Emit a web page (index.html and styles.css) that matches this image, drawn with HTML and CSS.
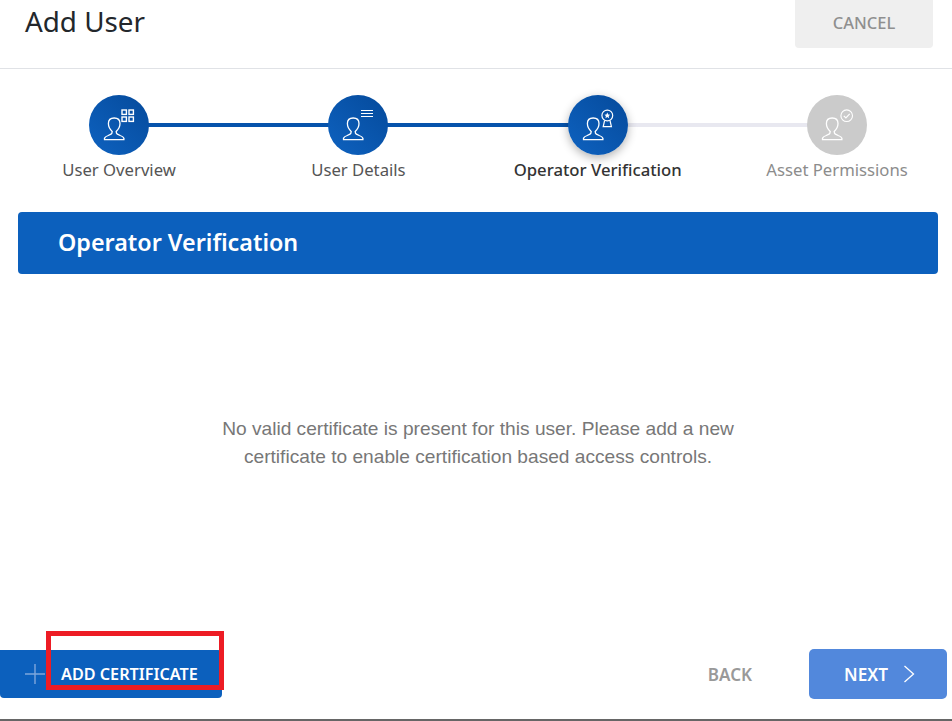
FILE: index.html
```html
<!DOCTYPE html>
<html lang="en">
<head>
<meta charset="utf-8">
<title>Add User</title>
<link rel="stylesheet" href="styles.css">
</head>
<body>
<svg class="defs" width="0" height="0" aria-hidden="true">
  <symbol id="person" viewBox="0 0 60 60">
    <path d="M15.5 44.6H34.9V43.2Q34.4 41.6 31.2 40.5L28.4 39.2Q27.2 38.2 27.2 36.4Q31 33 31 28.6Q31 23 25.2 23Q19.4 23 19.4 28.6Q19.4 33 23.2 36.4Q23.2 38.2 22 39.2L19.2 40.5Q16 41.6 15.5 43.2Z" fill="none" stroke="#fff" stroke-width="1.3"/>
  </symbol>
</svg>
<div class="page">
  <header class="top">
    <h1 class="title">Add User</h1>
    <button class="cancel">CANCEL</button>
  </header>

  <ol class="stepper">
    <li class="step done">
      <span class="dot">
        <svg class="ico" viewBox="0 0 60 60"><use href="#person"/>
          <g fill="none" stroke="#fff" stroke-width="1.4">
            <rect x="33" y="15" width="4.4" height="4.4"/><rect x="40" y="15" width="4.4" height="4.4"/>
            <rect x="33" y="22" width="4.4" height="4.4"/><rect x="40" y="22" width="4.4" height="4.4"/>
          </g>
        </svg>
      </span>
      <span class="label">User Overview</span>
    </li>
    <li class="step done">
      <span class="dot">
        <svg class="ico" viewBox="0 0 60 60"><use href="#person"/>
          <path d="M33 15.5H45M33 18.5H45M33 21.5H45" fill="none" stroke="#fff" stroke-width="1.1"/>
        </svg>
      </span>
      <span class="label">User Details</span>
    </li>
    <li class="step active">
      <span class="dot">
        <svg class="ico" viewBox="0 0 60 60"><use href="#person"/>
          <circle cx="39.3" cy="20.5" r="5.4" fill="none" stroke="#fff" stroke-width="1.2"/>
          <path d="M39.3 17.6L40.2 19.6L42.2 19.8L40.7 21.1L41.1 23.2L39.3 22.1L37.5 23.2L37.9 21.1L36.4 19.8L38.4 19.6Z" fill="#fff"/>
          <path d="M36.6 25.5L35.2 31.6H43.4L42 25.5" fill="none" stroke="#fff" stroke-width="1.2"/>
        </svg>
      </span>
      <span class="label">Operator Verification</span>
    </li>
    <li class="step pending">
      <span class="dot">
        <svg class="ico" viewBox="0 0 60 60"><use href="#person"/>
          <circle cx="39.7" cy="20.7" r="5.8" fill="none" stroke="#fff" stroke-width="1.1"/>
          <path d="M36.8 20.8L38.9 22.9L42.7 18.9" fill="none" stroke="#fff" stroke-width="1.2"/>
        </svg>
      </span>
      <span class="label">Asset Permissions</span>
    </li>
  </ol>

  <div class="banner">Operator Verification</div>

  <main class="message">
    <p class="note">No valid certificate is present for this user. Please add a new certificate to enable certification based access controls.</p>
  </main>

  <footer class="actions">
    <div class="add-wrap">
      <button class="add">
        <svg class="plus" viewBox="0 0 20 20"><path d="M10 0V20M0 10H20" fill="none" stroke="#7ea6dc" stroke-width="1.4"/></svg>
        <span>ADD CERTIFICATE</span>
      </button>
      <span class="callout"></span>
    </div>
    <div class="nav">
      <button class="back">BACK</button>
      <button class="next">
        <span>NEXT</span>
        <svg class="chev" viewBox="0 0 12 18"><path d="M1.5 1L10.5 9L1.5 17" fill="none" stroke="#fff" stroke-width="1.3"/></svg>
      </button>
    </div>
  </footer>
</div>
</body>
</html>
```

FILE: styles.css
```css
* { box-sizing: border-box; }
html, body { margin: 0; padding: 0; height: 721px; overflow: hidden; background: #fff; }
body { font-family: "Noto Sans", "Open Sans", sans-serif; color: #222; }
.defs { position: absolute; }
button { font-family: inherit; border: 0; cursor: pointer; }

.page { height: 721px; display: flex; flex-direction: column; border-bottom: 2px solid #666; }

.top { height: 69px; flex: none; display: flex; justify-content: space-between; align-items: flex-start; padding: 0 19px 0 25px; border-bottom: 1px solid #e0e2e6; }
.title { margin: 3px 0 0; font-size: 27.8px; line-height: 36px; font-weight: 400; color: #23272c; }
.cancel { width: 138px; height: 48px; background: #efefef; color: #8f8f8f; font-size: 16.5px; font-weight: 500; border-radius: 0 0 4px 4px; padding: 0 0 4px; }

.stepper { list-style: none; margin: 0 0 0 -0.6px; padding: 26px 0 0; display: grid; grid-template-columns: repeat(4, 239.33px); height: 117px; flex: none; }
.step { position: relative; display: flex; flex-direction: column; align-items: center; }
.step::after { content: ""; position: absolute; top: 28px; left: 50%; width: 100%; height: 4px; background: #e8e8f0; }
.step.done::after { background: #0653ab; }
.step:last-child::after { display: none; }
.dot { position: relative; z-index: 1; width: 60px; height: 60px; border-radius: 50%; background: linear-gradient(to top right, #0e62c0, #054a9b); }
.pending .dot { background: #cbcbcb; }
.active .dot { box-shadow: 0 3px 10px rgba(0, 0, 0, .3); }
.ico { display: block; width: 60px; height: 60px; }
.label { margin-top: 3px; font-size: 16.7px; line-height: 24px; color: #555; white-space: nowrap; }
.active .label { color: #333; font-weight: 500; }
.pending .label { color: #8c8c8c; }

.banner { flex: none; margin: 26px 14px 0 18px; height: 62px; padding: 0 0 2px 40px; display: flex; align-items: center; background: #0c60bd; border-radius: 4px; color: #fff; font-size: 23.3px; font-weight: 600; }

.message { flex: 1; padding: 141px 14px 0 18px; }
.note { margin: 0 auto; max-width: 540px; text-align: center; font-family: "Liberation Sans", Arial, sans-serif; font-size: 19.15px; line-height: 28px; color: #777; }

.actions { flex: none; height: 70px; display: flex; justify-content: space-between; align-items: flex-start; padding-right: 5px; }
.add-wrap { position: relative; margin-top: 1px; }
.add { width: 222px; height: 48px; padding: 0 0 0 25px; display: flex; align-items: center; gap: 16px; background: #0c60bd; color: #fff; font-size: 16.2px; font-weight: 600; border-radius: 0 4px 4px 4px; white-space: nowrap; }
.plus { width: 20px; height: 20px; flex: none; }
.callout { position: absolute; left: 46px; top: -19px; width: 178px; height: 59px; border: 5px solid #ed1c24; }
.nav { display: flex; align-items: center; gap: 57px; }
.back { background: none; padding: 0; color: #999; font-size: 17px; font-weight: 600; }
.next { width: 138px; height: 50px; display: flex; align-items: center; justify-content: center; gap: 15px; padding: 0 0 0 3px; background: #5288dc; color: #fff; font-size: 17.2px; font-weight: 600; border-radius: 5px; }
.chev { width: 12px; height: 18px; }
```
